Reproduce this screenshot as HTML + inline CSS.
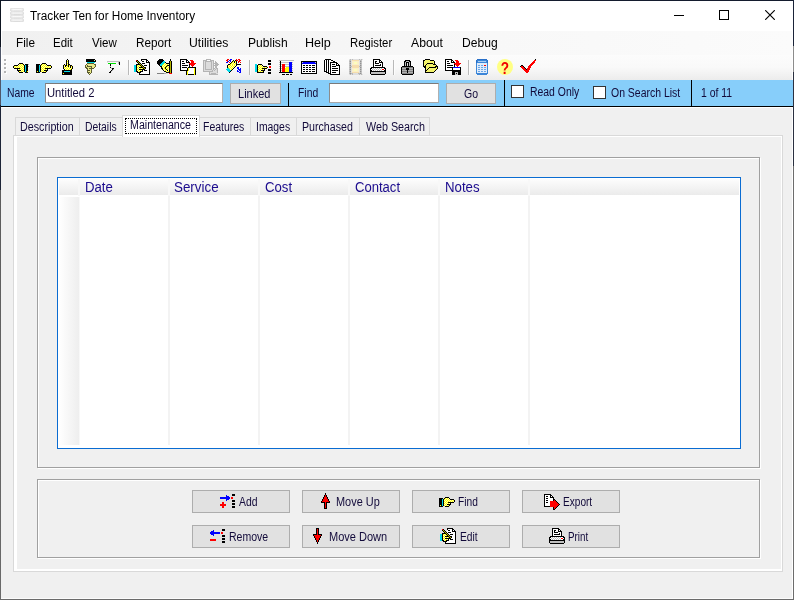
<!DOCTYPE html>
<html lang="en"><head><meta charset="utf-8"><title>Tracker Ten for Home Inventory</title>
<style>
html,body{margin:0;padding:0;}
body{width:794px;height:600px;overflow:hidden;background:#f0f0f0;position:relative;font-family:"Liberation Sans",sans-serif;font-size:11px;color:#000;}
.a{position:absolute;}
.ic{position:absolute;display:block;}
.t{position:absolute;white-space:nowrap;line-height:1;transform-origin:0 0;}
#win{position:absolute;left:0;top:0;width:794px;height:600px;background:#f0f0f0;}
#tbbg{left:1px;top:31px;width:792px;height:49px;background:#fff;}
#title{left:1px;top:1px;width:792px;height:30px;background:#fff;}
#menubar{left:2px;top:31px;width:790px;height:24px;background:linear-gradient(90deg,#f0f0f0,#f7f7f7 50%,#fbfbfb);}
#toolbar{left:2px;top:55px;width:790px;height:25px;background:linear-gradient(#fcfcfc,#f9f9f9 50%,#ececec);}
.m{font-size:12px;top:37px;}
#bluebar{left:1px;top:80px;width:792px;height:26px;background:#87cefa;}
.inp{background:#fff;border:1px solid;border-color:#7a7a7a #b0b0b0 #a8a8a8 #8c8c8c;box-sizing:border-box;}
.btn{background:#e1e1e1;border:1px solid #adadad;box-sizing:border-box;}
.tab{box-sizing:border-box;border:1px solid #d9d9d9;border-bottom:none;background:#f0f0f0;top:117px;height:18px;}
.tl{font-size:11px;top:121px;}
.bl{font-size:11px;}
.gh{font-size:13px;color:#12128a;top:181px;}
.cs{top:179px;width:2px;height:266px;background:linear-gradient(#f8f8f8 0,#f8f8f8 17px,#f3f3f3 17px,#f3f3f3 100%);}
.grip{left:4px;width:2px;height:2px;background:#b4b4b4;box-shadow:1px 1px 0 #fff;}
.tsep{top:60px;width:1px;height:15px;background:#b9b9b9;box-shadow:1px 0 0 #fdfdfd;}
.qm{left:497px;top:60px;width:16px;height:16px;line-height:17px;text-align:center;font-size:17px;font-weight:bold;color:#f00000;transform:scaleX(.8);}

</style></head>
<body>
<div id="win">
<div class="a" id="title"></div>
<svg class="ic" style="left:10px;top:8px" width="14" height="14" viewBox="0 0 14 14">
<defs><linearGradient id="dv" x1="0" x2="0" y1="0" y2="1"><stop offset="0" stop-color="#dadada"/><stop offset=".45" stop-color="#fafafa"/><stop offset="1" stop-color="#d2d2d2"/></linearGradient>
<linearGradient id="dh" x1="0" x2="1" y1="0" y2="0"><stop offset="0" stop-color="#d0d0d0" stop-opacity=".8"/><stop offset=".3" stop-color="#fff" stop-opacity="0"/><stop offset=".7" stop-color="#fff" stop-opacity="0"/><stop offset="1" stop-color="#d0d0d0" stop-opacity=".8"/></linearGradient></defs>
<g><rect x="0" y="0" width="14" height="3.5" rx="1.7" fill="url(#dv)"/><rect x="0" y="3.5" width="14" height="3.5" rx="1.7" fill="url(#dv)"/><rect x="0" y="7" width="14" height="3.5" rx="1.7" fill="url(#dv)"/><rect x="0" y="10.5" width="14" height="3.5" rx="1.7" fill="url(#dv)"/>
<rect x="0" y="0" width="14" height="3.5" rx="1.7" fill="url(#dh)"/><rect x="0" y="3.5" width="14" height="3.5" rx="1.7" fill="url(#dh)"/><rect x="0" y="7" width="14" height="3.5" rx="1.7" fill="url(#dh)"/><rect x="0" y="10.5" width="14" height="3.5" rx="1.7" fill="url(#dh)"/></g>
</svg>
<div class="a" style="left:674px;top:15px;width:10px;height:1px;background:#000"></div>
<div class="a" style="left:719px;top:10px;width:10px;height:10px;box-sizing:border-box;border:1px solid #000"></div>
<svg class="ic" style="left:765px;top:10px" width="10" height="10" viewBox="0 0 10 10"><path d="M0.2 0.2L9.8 9.8M9.8 0.2L0.2 9.8" stroke="#000" stroke-width="1.15" fill="none"/></svg>
<div class="a" id="tbbg"></div>
<div class="a" id="menubar"></div>
<div class="a" id="toolbar"></div>
<!-- toolbar grip -->
<div class="a grip" style="top:59px"></div><div class="a grip" style="top:63px"></div><div class="a grip" style="top:67px"></div><div class="a grip" style="top:71px"></div>
<svg class="ic" style="left:13px;top:59px" width="16" height="14" viewBox="0 0 16 14" shape-rendering="crispEdges"><path fill="#000" d="M6 4h4v1h-4zM5 5h1v1h-1zM10 5h1v1h-1zM12 5h3v1h-3zM1 6h4v1h-4zM11 6h1v1h-1zM13 6h2v1h-2zM0 7h1v1h-1zM11 7h1v1h-1zM13 7h2v1h-2zM0 8h1v1h-1zM11 8h1v1h-1zM13 8h2v1h-2zM1 9h6v1h-6zM11 9h1v1h-1zM13 9h2v1h-2zM4 10h1v1h-1zM11 10h1v1h-1zM13 10h2v1h-2zM4 11h4v1h-4zM11 11h1v1h-1zM13 11h2v1h-2zM5 12h1v1h-1zM11 12h1v1h-1zM13 12h1v1h-1zM6 13h4v1h-4zM12 13h3v1h-3z"/><path fill="#ffffb0" d="M6 5h1v1h-1zM8 5h1v1h-1zM5 6h1v1h-1zM7 6h1v1h-1zM9 6h1v1h-1zM2 7h1v1h-1zM4 7h1v1h-1zM6 7h1v1h-1zM8 7h1v1h-1zM10 7h1v1h-1zM1 8h1v1h-1zM3 8h1v1h-1zM5 8h1v1h-1zM7 8h1v1h-1zM9 8h1v1h-1zM8 9h1v1h-1zM10 9h1v1h-1zM5 10h1v1h-1zM7 10h1v1h-1zM9 10h1v1h-1zM8 11h1v1h-1zM10 11h1v1h-1zM7 12h1v1h-1zM9 12h1v1h-1z"/><path fill="#ffff00" d="M7 5h1v1h-1zM9 5h1v1h-1zM6 6h1v1h-1zM8 6h1v1h-1zM10 6h1v1h-1zM1 7h1v1h-1zM3 7h1v1h-1zM5 7h1v1h-1zM7 7h1v1h-1zM9 7h1v1h-1zM2 8h1v1h-1zM4 8h1v1h-1zM6 8h1v1h-1zM8 8h1v1h-1zM10 8h1v1h-1zM7 9h1v1h-1zM9 9h1v1h-1zM6 10h1v1h-1zM8 10h1v1h-1zM10 10h1v1h-1zM9 11h1v1h-1zM6 12h1v1h-1zM8 12h1v1h-1zM10 12h1v1h-1zM14 12h1v1h-1z"/><path fill="#b0b0b0" d="M15 5h1v1h-1zM15 7h1v1h-1z"/><path fill="#00d8e8" d="M12 6h1v1h-1zM12 7h1v1h-1zM12 8h1v1h-1zM12 9h1v1h-1zM12 10h1v1h-1zM12 11h1v1h-1zM12 12h1v1h-1z"/></svg>
<svg class="ic" style="left:36px;top:59px" width="16" height="14" viewBox="0 0 16 14" shape-rendering="crispEdges"><path fill="#000" d="M6 4h4v1h-4zM0 5h4v1h-4zM5 5h1v1h-1zM10 5h1v1h-1zM0 6h3v1h-3zM4 6h1v1h-1zM11 6h4v1h-4zM0 7h3v1h-3zM4 7h1v1h-1zM15 7h1v1h-1zM0 8h3v1h-3zM4 8h1v1h-1zM15 8h1v1h-1zM0 9h3v1h-3zM4 9h1v1h-1zM9 9h6v1h-6zM0 10h3v1h-3zM4 10h1v1h-1zM11 10h1v1h-1zM0 11h3v1h-3zM4 11h1v1h-1zM8 11h4v1h-4zM0 12h1v1h-1zM2 12h1v1h-1zM4 12h1v1h-1zM10 12h1v1h-1zM0 13h4v1h-4zM6 13h4v1h-4z"/><path fill="#ffff00" d="M6 5h1v1h-1zM8 5h1v1h-1zM5 6h1v1h-1zM7 6h1v1h-1zM9 6h1v1h-1zM6 7h1v1h-1zM8 7h1v1h-1zM10 7h1v1h-1zM12 7h1v1h-1zM14 7h1v1h-1zM5 8h1v1h-1zM7 8h1v1h-1zM9 8h1v1h-1zM11 8h1v1h-1zM13 8h1v1h-1zM6 9h1v1h-1zM8 9h1v1h-1zM5 10h1v1h-1zM7 10h1v1h-1zM9 10h1v1h-1zM6 11h1v1h-1zM1 12h1v1h-1zM5 12h1v1h-1zM7 12h1v1h-1zM9 12h1v1h-1z"/><path fill="#ffffb0" d="M7 5h1v1h-1zM9 5h1v1h-1zM6 6h1v1h-1zM8 6h1v1h-1zM10 6h1v1h-1zM5 7h1v1h-1zM7 7h1v1h-1zM9 7h1v1h-1zM11 7h1v1h-1zM13 7h1v1h-1zM6 8h1v1h-1zM8 8h1v1h-1zM10 8h1v1h-1zM12 8h1v1h-1zM14 8h1v1h-1zM5 9h1v1h-1zM7 9h1v1h-1zM6 10h1v1h-1zM8 10h1v1h-1zM10 10h1v1h-1zM5 11h1v1h-1zM7 11h1v1h-1zM6 12h1v1h-1zM8 12h1v1h-1z"/><path fill="#00d8e8" d="M3 6h1v1h-1zM3 7h1v1h-1zM3 8h1v1h-1zM3 9h1v1h-1zM3 10h1v1h-1zM3 11h1v1h-1zM3 12h1v1h-1z"/></svg>
<svg class="ic" style="left:59px;top:59px" width="16" height="16" viewBox="0 0 16 16" shape-rendering="crispEdges"><path fill="#000" d="M8 0h1v1h-1zM7 1h1v1h-1zM9 1h1v1h-1zM7 2h1v1h-1zM9 2h1v1h-1zM7 3h1v1h-1zM9 3h1v1h-1zM7 4h1v1h-1zM9 4h1v1h-1zM5 5h1v1h-1zM7 5h1v1h-1zM9 5h2v1h-2zM4 6h1v1h-1zM6 6h2v1h-2zM9 6h1v1h-1zM11 6h2v1h-2zM4 7h1v1h-1zM6 7h1v1h-1zM9 7h1v1h-1zM11 7h1v1h-1zM13 7h1v1h-1zM4 8h1v1h-1zM11 8h1v1h-1zM13 8h1v1h-1zM4 9h1v1h-1zM13 9h1v1h-1zM5 10h1v1h-1zM12 10h1v1h-1zM3 11h10v1h-10zM3 12h2v1h-2zM11 12h2v1h-2zM3 13h10v1h-10zM3 14h1v1h-1zM5 14h8v1h-8zM3 15h10v1h-10z"/><path fill="#ffffb0" d="M8 1h1v1h-1zM8 3h1v1h-1zM8 5h1v1h-1zM5 7h1v1h-1zM7 7h1v1h-1zM10 7h1v1h-1zM6 8h1v1h-1zM8 8h1v1h-1zM10 8h1v1h-1zM12 8h1v1h-1zM5 9h1v1h-1zM7 9h1v1h-1zM9 9h1v1h-1zM11 9h1v1h-1zM6 10h1v1h-1zM8 10h1v1h-1zM10 10h1v1h-1z"/><path fill="#ffff00" d="M8 2h1v1h-1zM8 4h1v1h-1zM5 6h1v1h-1zM8 6h1v1h-1zM10 6h1v1h-1zM8 7h1v1h-1zM12 7h1v1h-1zM5 8h1v1h-1zM7 8h1v1h-1zM9 8h1v1h-1zM6 9h1v1h-1zM8 9h1v1h-1zM10 9h1v1h-1zM12 9h1v1h-1zM7 10h1v1h-1zM9 10h1v1h-1zM11 10h1v1h-1zM4 14h1v1h-1z"/><path fill="#00d8e8" d="M5 12h6v1h-6z"/></svg>
<svg class="ic" style="left:82px;top:59px" width="16" height="16" viewBox="0 0 16 16" shape-rendering="crispEdges"><path fill="#000" d="M4 0h9v1h-9zM4 1h8v1h-8zM13 1h1v1h-1zM4 2h10v1h-10z"/><path fill="#eaea88" d="M12 1h1v1h-1zM5 5h7v1h-7zM4 6h1v1h-1zM6 6h7v1h-7zM4 7h1v1h-1zM10 7h3v1h-3zM5 8h4v1h-4zM10 8h2v1h-2zM6 9h1v1h-1zM6 10h3v1h-3zM8 11h1v1h-1zM6 12h3v1h-3zM8 13h1v1h-1zM7 14h1v1h-1z"/><path fill="#00d8e8" d="M5 3h8v1h-8z"/><path fill="#5c5c30" d="M5 4h7v1h-7zM4 5h1v1h-1zM12 5h2v1h-2zM3 6h1v1h-1zM5 6h1v1h-1zM13 6h1v1h-1zM3 7h1v1h-1zM5 7h5v1h-5zM13 7h1v1h-1zM3 8h2v1h-2zM9 8h1v1h-1zM12 8h1v1h-1zM4 9h2v1h-2zM7 9h5v1h-5zM5 10h1v1h-1zM9 10h1v1h-1zM5 11h3v1h-3zM9 11h1v1h-1zM5 12h1v1h-1zM9 12h1v1h-1zM5 13h3v1h-3zM9 13h1v1h-1zM6 14h1v1h-1zM8 14h1v1h-1zM7 15h1v1h-1z"/></svg>
<svg class="ic" style="left:105px;top:59px" width="16" height="14" viewBox="0 0 16 14" shape-rendering="crispEdges"><path fill="#c0c0c0" d="M2 2h13v1h-13zM13 3h1v1h-1zM13 4h1v1h-1zM5 7h1v1h-1zM6 9h1v1h-1zM8 10h1v1h-1zM7 11h1v1h-1zM6 12h1v1h-1z"/><path fill="#e8e8e8" d="M2 3h1v1h-1z"/><path fill="#000" d="M14 3h1v1h-1zM14 4h1v1h-1zM5 5h1v1h-1zM14 5h1v1h-1zM5 6h1v1h-1zM5 8h1v1h-1zM7 9h2v1h-2zM7 10h1v1h-1zM6 11h1v1h-1zM5 12h1v1h-1zM4 13h2v1h-2z"/><path fill="#00e000" d="M3 4h8v1h-8z"/></svg>
<div class="a tsep" style="left:128px"></div>
<svg class="ic" style="left:134px;top:59px" width="16" height="16" viewBox="0 0 16 16" shape-rendering="crispEdges"><path fill="#000" d="M7 0h6v1h-6zM3 1h1v1h-1zM7 1h1v1h-1zM12 1h2v1h-2zM2 2h1v1h-1zM4 2h1v1h-1zM8 2h2v1h-2zM12 2h1v1h-1zM14 2h1v1h-1zM3 3h1v1h-1zM5 3h1v1h-1zM12 3h4v1h-4zM4 4h1v1h-1zM6 4h1v1h-1zM8 4h3v1h-3zM15 4h1v1h-1zM2 5h4v1h-4zM7 5h1v1h-1zM15 5h1v1h-1zM2 6h1v1h-1zM6 6h1v1h-1zM8 6h1v1h-1zM10 6h3v1h-3zM15 6h1v1h-1zM2 7h1v1h-1zM7 7h1v1h-1zM9 7h1v1h-1zM15 7h1v1h-1zM2 8h1v1h-1zM5 8h4v1h-4zM10 8h2v1h-2zM15 8h1v1h-1zM2 9h1v1h-1zM9 9h1v1h-1zM11 9h1v1h-1zM15 9h1v1h-1zM2 10h1v1h-1zM5 10h6v1h-6zM15 10h1v1h-1zM2 11h1v1h-1zM8 11h1v1h-1zM10 11h3v1h-3zM15 11h1v1h-1zM2 12h2v1h-2zM6 12h3v1h-3zM15 12h1v1h-1zM3 13h4v1h-4zM15 13h1v1h-1zM5 14h1v1h-1zM15 14h1v1h-1zM5 15h11v1h-11z"/><path fill="#ff0000" d="M2 1h1v1h-1z"/><path fill="#fff" d="M8 1h4v1h-4zM7 2h1v1h-1zM10 2h2v1h-2zM13 2h1v1h-1zM7 3h5v1h-5zM7 4h1v1h-1zM11 4h4v1h-4zM8 5h7v1h-7zM9 6h1v1h-1zM13 6h2v1h-2zM10 7h5v1h-5zM12 8h3v1h-3zM12 9h3v1h-3zM11 10h4v1h-4zM9 11h1v1h-1zM13 11h2v1h-2zM9 12h6v1h-6zM7 13h8v1h-8zM6 14h9v1h-9z"/><path fill="#b4b400" d="M3 2h1v1h-1zM4 3h1v1h-1zM5 4h1v1h-1zM6 5h1v1h-1zM7 6h1v1h-1zM8 7h1v1h-1zM9 8h1v1h-1zM10 9h1v1h-1z"/><path fill="#00d8e8" d="M0 6h2v1h-2zM0 7h2v1h-2zM0 8h2v1h-2zM0 9h2v1h-2zM0 10h2v1h-2zM0 11h2v1h-2zM0 12h2v1h-2z"/><path fill="#ffff00" d="M3 6h1v1h-1zM5 6h1v1h-1zM4 7h1v1h-1zM6 7h1v1h-1zM3 8h1v1h-1zM4 9h1v1h-1zM6 9h1v1h-1zM8 9h1v1h-1zM3 10h1v1h-1zM4 11h1v1h-1zM6 11h1v1h-1zM5 12h1v1h-1z"/><path fill="#ffffb0" d="M4 6h1v1h-1zM3 7h1v1h-1zM5 7h1v1h-1zM4 8h1v1h-1zM3 9h1v1h-1zM5 9h1v1h-1zM7 9h1v1h-1zM4 10h1v1h-1zM3 11h1v1h-1zM5 11h1v1h-1zM7 11h1v1h-1zM4 12h1v1h-1z"/></svg>
<svg class="ic" style="left:157px;top:59px" width="16" height="16" viewBox="0 0 16 16" shape-rendering="crispEdges"><path fill="#000" d="M2 0h4v1h-4zM13 0h1v1h-1zM1 1h6v1h-6zM13 1h1v1h-1zM0 2h6v1h-6zM12 2h1v1h-1zM14 2h1v1h-1zM0 3h5v1h-5zM8 3h1v1h-1zM12 3h1v1h-1zM14 3h1v1h-1zM0 4h4v1h-4zM9 4h4v1h-4zM14 4h1v1h-1zM1 5h2v1h-2zM12 5h1v1h-1zM14 5h1v1h-1zM2 6h1v1h-1zM10 6h3v1h-3zM14 6h1v1h-1zM3 7h2v1h-2zM9 7h1v1h-1zM12 7h1v1h-1zM14 7h1v1h-1zM4 8h1v1h-1zM8 8h1v1h-1zM12 8h1v1h-1zM14 8h1v1h-1zM4 9h2v1h-2zM8 9h1v1h-1zM12 9h1v1h-1zM14 9h1v1h-1zM5 10h1v1h-1zM9 10h1v1h-1zM12 10h1v1h-1zM14 10h1v1h-1zM6 11h1v1h-1zM10 11h1v1h-1zM12 11h1v1h-1zM14 11h1v1h-1zM7 12h2v1h-2zM12 12h1v1h-1zM14 12h1v1h-1zM9 13h4v1h-4zM14 13h1v1h-1z"/><path fill="#00d8e8" d="M6 2h2v1h-2zM5 3h3v1h-3zM4 4h3v1h-3zM3 5h3v1h-3zM3 6h2v1h-2z"/><path fill="#b4b400" d="M13 2h1v1h-1zM13 3h1v1h-1zM13 4h1v1h-1zM13 5h1v1h-1zM13 6h1v1h-1zM13 7h1v1h-1zM13 8h1v1h-1zM13 9h1v1h-1zM13 10h1v1h-1zM13 11h1v1h-1zM13 12h1v1h-1zM13 13h1v1h-1z"/><path fill="#ffff00" d="M7 4h1v1h-1zM6 5h1v1h-1zM8 5h1v1h-1zM10 5h1v1h-1zM5 6h1v1h-1zM7 6h1v1h-1zM9 6h1v1h-1zM6 7h1v1h-1zM8 7h1v1h-1zM10 7h1v1h-1zM5 8h1v1h-1zM7 8h1v1h-1zM9 8h1v1h-1zM11 8h1v1h-1zM7 9h1v1h-1zM10 9h1v1h-1zM6 10h1v1h-1zM8 10h1v1h-1zM10 10h1v1h-1zM8 11h1v1h-1zM9 12h1v1h-1zM11 12h1v1h-1z"/><path fill="#ffffb0" d="M8 4h1v1h-1zM7 5h1v1h-1zM9 5h1v1h-1zM11 5h1v1h-1zM6 6h1v1h-1zM8 6h1v1h-1zM5 7h1v1h-1zM7 7h1v1h-1zM11 7h1v1h-1zM6 8h1v1h-1zM10 8h1v1h-1zM6 9h1v1h-1zM9 9h1v1h-1zM11 9h1v1h-1zM7 10h1v1h-1zM11 10h1v1h-1zM7 11h1v1h-1zM9 11h1v1h-1zM11 11h1v1h-1zM10 12h1v1h-1z"/><path fill="#808080" d="M0 14h7v1h-7z"/><path fill="#b0b0b0" d="M7 14h2v1h-2z"/><path fill="#dcdcdc" d="M9 14h2v1h-2z"/><path fill="#ff0000" d="M12 14h3v1h-3z"/></svg>
<svg class="ic" style="left:180px;top:59px" width="16" height="16" viewBox="0 0 16 16" shape-rendering="crispEdges"><path fill="#000" d="M0 0h7v1h-7zM0 1h1v1h-1zM6 1h2v1h-2zM0 2h1v1h-1zM2 2h2v1h-2zM6 2h1v1h-1zM8 2h1v1h-1zM0 3h1v1h-1zM6 3h4v1h-4zM0 4h1v1h-1zM2 4h3v1h-3zM0 5h1v1h-1zM9 5h1v1h-1zM0 6h1v1h-1zM2 6h6v1h-6zM9 6h1v1h-1zM0 7h1v1h-1zM9 7h1v1h-1zM0 8h1v1h-1zM2 8h5v1h-5zM8 8h8v1h-8zM0 9h1v1h-1zM7 9h1v1h-1zM15 9h1v1h-1zM0 10h1v1h-1zM7 10h1v1h-1zM15 10h1v1h-1zM0 11h8v1h-8zM15 11h1v1h-1zM6 12h1v1h-1zM15 12h1v1h-1zM6 13h1v1h-1zM15 13h1v1h-1zM6 14h1v1h-1zM15 14h1v1h-1zM6 15h1v1h-1zM8 15h6v1h-6zM15 15h1v1h-1z"/><path fill="#fff" d="M1 1h5v1h-5zM1 2h1v1h-1zM4 2h2v1h-2zM7 2h1v1h-1zM1 3h5v1h-5zM1 4h1v1h-1zM5 4h4v1h-4zM1 5h8v1h-8zM1 6h1v1h-1zM8 6h1v1h-1zM1 7h8v1h-8zM1 8h1v1h-1zM7 8h1v1h-1zM1 9h6v1h-6zM9 9h5v1h-5zM1 10h6v1h-6zM9 10h5v1h-5zM9 11h5v1h-5zM8 12h6v1h-6zM8 13h6v1h-6zM8 14h6v1h-6z"/><path fill="#ff0000" d="M10 1h3v1h-3zM11 2h3v1h-3zM11 3h3v1h-3zM9 4h7v1h-7zM10 5h5v1h-5zM11 6h3v1h-3zM12 7h1v1h-1z"/><path fill="#ffff00" d="M8 9h1v1h-1zM14 9h1v1h-1zM8 10h1v1h-1zM14 10h1v1h-1zM8 11h1v1h-1zM14 11h1v1h-1zM7 12h1v1h-1zM14 12h1v1h-1zM7 13h1v1h-1zM14 13h1v1h-1zM7 14h1v1h-1zM14 14h1v1h-1zM7 15h1v1h-1zM14 15h1v1h-1z"/></svg>
<svg class="ic" style="left:203px;top:59px" width="16" height="16" viewBox="0 0 16 16" shape-rendering="crispEdges"><path fill="#b4b4b4" d="M3 0h5v1h-5zM0 1h4v1h-4zM7 1h4v1h-4zM0 2h1v1h-1zM2 2h7v1h-7zM10 2h1v1h-1zM12 2h1v1h-1zM0 3h1v1h-1zM2 3h1v1h-1zM8 3h1v1h-1zM10 3h1v1h-1zM12 3h2v1h-2zM0 4h1v1h-1zM2 4h1v1h-1zM8 4h1v1h-1zM10 4h5v1h-5zM0 5h1v1h-1zM2 5h1v1h-1zM8 5h1v1h-1zM10 5h1v1h-1zM12 5h4v1h-4zM0 6h1v1h-1zM2 6h1v1h-1zM8 6h1v1h-1zM10 6h5v1h-5zM0 7h1v1h-1zM2 7h1v1h-1zM8 7h1v1h-1zM10 7h1v1h-1zM12 7h2v1h-2zM0 8h1v1h-1zM2 8h1v1h-1zM8 8h1v1h-1zM10 8h1v1h-1zM12 8h2v1h-2zM0 9h1v1h-1zM2 9h1v1h-1zM8 9h1v1h-1zM10 9h2v1h-2zM13 9h2v1h-2zM0 10h1v1h-1zM2 10h7v1h-7zM10 10h1v1h-1zM12 10h1v1h-1zM14 10h1v1h-1zM0 11h1v1h-1zM9 11h1v1h-1zM11 11h1v1h-1zM14 11h1v1h-1zM0 12h10v1h-10zM14 12h1v1h-1zM6 13h1v1h-1zM14 13h1v1h-1zM6 14h1v1h-1zM8 14h5v1h-5zM6 15h9v1h-9z"/><path fill="#dcdcdc" d="M1 2h1v1h-1zM9 2h1v1h-1zM1 3h1v1h-1zM3 3h5v1h-5zM9 3h1v1h-1zM1 4h1v1h-1zM3 4h5v1h-5zM9 4h1v1h-1zM1 5h1v1h-1zM3 5h5v1h-5zM9 5h1v1h-1zM1 6h1v1h-1zM3 6h5v1h-5zM9 6h1v1h-1zM1 7h1v1h-1zM3 7h5v1h-5zM9 7h1v1h-1zM1 8h1v1h-1zM3 8h5v1h-5zM9 8h1v1h-1zM1 9h1v1h-1zM3 9h5v1h-5zM9 9h1v1h-1zM12 9h1v1h-1zM1 10h1v1h-1zM9 10h1v1h-1zM11 10h1v1h-1zM13 10h1v1h-1zM1 11h8v1h-8zM10 11h1v1h-1zM12 11h2v1h-2zM10 12h4v1h-4zM7 13h7v1h-7zM7 14h1v1h-1zM13 14h2v1h-2z"/></svg>
<svg class="ic" style="left:226px;top:59px" width="16" height="16" viewBox="0 0 16 16" shape-rendering="crispEdges"><path fill="#ff0000" d="M1 0h2v1h-2zM10 0h1v1h-1zM12 0h2v1h-2zM0 1h2v1h-2zM10 1h2v1h-2zM13 1h2v1h-2zM1 2h1v1h-1zM12 2h2v1h-2zM3 3h1v1h-1zM12 3h1v1h-1zM14 3h1v1h-1z"/><path fill="#0000ff" d="M4 0h2v1h-2zM3 1h2v1h-2zM2 2h1v1h-1zM4 2h1v1h-1zM0 3h2v1h-2zM11 8h2v1h-2zM11 9h2v1h-2zM14 9h1v1h-1zM12 10h3v1h-3zM11 11h1v1h-1zM13 11h2v1h-2zM11 12h2v1h-2zM14 12h1v1h-1zM13 13h2v1h-2z"/><path fill="#000" d="M7 1h1v1h-1zM9 1h1v1h-1zM6 2h1v1h-1zM8 2h1v1h-1zM10 2h1v1h-1zM5 3h1v1h-1zM8 3h1v1h-1zM10 3h1v1h-1zM4 4h1v1h-1zM10 4h1v1h-1zM2 5h2v1h-2zM10 5h5v1h-5zM1 6h1v1h-1zM10 6h1v1h-1zM1 7h1v1h-1zM9 7h1v1h-1zM1 8h1v1h-1zM8 8h1v1h-1zM7 9h1v1h-1zM6 10h1v1h-1zM5 11h1v1h-1zM4 12h1v1h-1zM3 13h1v1h-1z"/><path fill="#ffff00" d="M7 2h1v1h-1zM9 2h1v1h-1zM6 3h1v1h-1zM5 4h1v1h-1zM7 4h1v1h-1zM9 4h1v1h-1zM4 5h1v1h-1zM6 5h1v1h-1zM8 5h1v1h-1zM2 6h1v1h-1zM4 6h1v1h-1zM6 6h1v1h-1zM8 6h1v1h-1zM3 7h1v1h-1zM5 7h1v1h-1zM7 7h1v1h-1zM2 8h1v1h-1zM4 8h1v1h-1zM6 8h1v1h-1zM3 9h1v1h-1zM5 9h1v1h-1zM5 10h1v1h-1z"/><path fill="#ffffb0" d="M7 3h1v1h-1zM9 3h1v1h-1zM6 4h1v1h-1zM8 4h1v1h-1zM5 5h1v1h-1zM7 5h1v1h-1zM9 5h1v1h-1zM3 6h1v1h-1zM5 6h1v1h-1zM7 6h1v1h-1zM9 6h1v1h-1zM2 7h1v1h-1zM4 7h1v1h-1zM6 7h1v1h-1zM8 7h1v1h-1zM3 8h1v1h-1zM5 8h1v1h-1zM7 8h1v1h-1zM4 9h1v1h-1zM6 9h1v1h-1zM4 10h1v1h-1z"/><path fill="#00d8e8" d="M1 9h2v1h-2zM0 10h4v1h-4zM1 11h4v1h-4zM2 12h2v1h-2z"/></svg>
<div class="a tsep" style="left:249px"></div>
<svg class="ic" style="left:255px;top:59px" width="16" height="16" viewBox="0 0 16 16" shape-rendering="crispEdges"><path fill="#000" d="M13 1h3v1h-3zM13 2h3v1h-3zM13 4h3v1h-3zM3 5h4v1h-4zM13 5h3v1h-3zM2 6h1v1h-1zM7 6h1v1h-1zM2 7h1v1h-1zM8 7h4v1h-4zM2 8h1v1h-1zM12 8h1v1h-1zM2 9h1v1h-1zM7 9h5v1h-5zM2 10h1v1h-1zM9 10h1v1h-1zM13 10h3v1h-3zM2 11h1v1h-1zM6 11h4v1h-4zM13 11h3v1h-3zM2 12h1v1h-1zM8 12h1v1h-1zM2 13h7v1h-7zM13 13h3v1h-3zM13 14h3v1h-3z"/><path fill="#00d8e8" d="M0 5h2v1h-2zM0 6h2v1h-2zM0 7h2v1h-2zM0 8h2v1h-2zM0 9h2v1h-2zM0 10h2v1h-2zM0 11h2v1h-2zM0 12h2v1h-2z"/><path fill="#ffff00" d="M3 6h1v1h-1zM5 6h1v1h-1zM4 7h1v1h-1zM6 7h1v1h-1zM3 8h1v1h-1zM5 8h1v1h-1zM7 8h1v1h-1zM9 8h1v1h-1zM11 8h1v1h-1zM4 9h1v1h-1zM6 9h1v1h-1zM3 10h1v1h-1zM5 10h1v1h-1zM7 10h1v1h-1zM4 11h1v1h-1zM3 12h1v1h-1zM5 12h1v1h-1zM7 12h1v1h-1z"/><path fill="#ffffb0" d="M4 6h1v1h-1zM6 6h1v1h-1zM3 7h1v1h-1zM5 7h1v1h-1zM7 7h1v1h-1zM4 8h1v1h-1zM6 8h1v1h-1zM8 8h1v1h-1zM10 8h1v1h-1zM3 9h1v1h-1zM5 9h1v1h-1zM4 10h1v1h-1zM6 10h1v1h-1zM8 10h1v1h-1zM3 11h1v1h-1zM5 11h1v1h-1zM4 12h1v1h-1zM6 12h1v1h-1z"/><path fill="#ff0000" d="M14 7h2v1h-2zM14 8h2v1h-2z"/></svg>
<svg class="ic" style="left:278px;top:59px" width="16" height="16" viewBox="0 0 16 16" shape-rendering="crispEdges"><path fill="#c0c0c0" d="M1 1h15v1h-15zM1 3h1v1h-1zM3 3h8v1h-8zM14 3h1v1h-1zM1 5h1v1h-1zM3 5h1v1h-1zM7 5h4v1h-4zM14 5h1v1h-1zM1 7h1v1h-1zM3 7h1v1h-1zM7 7h4v1h-4zM14 7h1v1h-1zM1 9h1v1h-1zM3 9h1v1h-1zM14 9h1v1h-1zM1 11h1v1h-1zM3 11h1v1h-1zM14 11h1v1h-1z"/><path fill="#000" d="M2 2h1v1h-1zM2 3h1v1h-1zM2 4h1v1h-1zM2 5h1v1h-1zM2 6h1v1h-1zM2 7h1v1h-1zM2 8h1v1h-1zM2 9h1v1h-1zM2 10h1v1h-1zM2 11h1v1h-1zM2 12h1v1h-1zM1 13h14v1h-14zM4 15h3v1h-3zM8 15h3v1h-3zM12 15h2v1h-2z"/><path fill="#0000ff" d="M11 3h3v1h-3zM11 4h3v1h-3zM11 5h3v1h-3zM11 6h3v1h-3zM11 7h3v1h-3zM11 8h3v1h-3zM11 9h3v1h-3zM11 10h3v1h-3zM11 11h3v1h-3zM11 12h3v1h-3z"/><path fill="#ff0000" d="M4 5h3v1h-3zM4 6h3v1h-3zM4 7h3v1h-3zM4 8h3v1h-3zM4 9h3v1h-3zM4 10h3v1h-3zM4 11h3v1h-3zM4 12h3v1h-3z"/><path fill="#ffff00" d="M8 8h3v1h-3zM7 9h4v1h-4zM7 10h4v1h-4zM7 11h4v1h-4zM7 12h4v1h-4z"/></svg>
<svg class="ic" style="left:301px;top:59px" width="16" height="15" viewBox="0 0 16 15" shape-rendering="crispEdges"><path fill="#000" d="M0 2h16v1h-16zM0 3h1v1h-1zM15 3h1v1h-1zM0 4h1v1h-1zM15 4h1v1h-1zM0 5h1v1h-1zM15 5h1v1h-1zM0 6h1v1h-1zM2 6h2v1h-2zM5 6h2v1h-2zM8 6h2v1h-2zM11 6h3v1h-3zM15 6h1v1h-1zM0 7h1v1h-1zM15 7h1v1h-1zM0 8h1v1h-1zM2 8h2v1h-2zM5 8h2v1h-2zM8 8h2v1h-2zM11 8h3v1h-3zM15 8h1v1h-1zM0 9h1v1h-1zM15 9h1v1h-1zM0 10h1v1h-1zM2 10h2v1h-2zM5 10h2v1h-2zM8 10h2v1h-2zM11 10h3v1h-3zM15 10h1v1h-1zM0 11h1v1h-1zM15 11h1v1h-1zM0 12h1v1h-1zM2 12h2v1h-2zM5 12h2v1h-2zM8 12h2v1h-2zM11 12h3v1h-3zM15 12h1v1h-1zM0 13h1v1h-1zM15 13h1v1h-1zM0 14h16v1h-16z"/><path fill="#c0c0c0" d="M1 3h1v1h-1zM14 3h1v1h-1z"/><path fill="#0000ff" d="M2 3h12v1h-12zM1 4h14v1h-14z"/><path fill="#fff" d="M1 5h14v1h-14zM1 6h1v1h-1zM4 6h1v1h-1zM7 6h1v1h-1zM10 6h1v1h-1zM14 6h1v1h-1zM1 7h14v1h-14zM1 8h1v1h-1zM4 8h1v1h-1zM7 8h1v1h-1zM10 8h1v1h-1zM14 8h1v1h-1zM1 9h14v1h-14zM1 10h1v1h-1zM4 10h1v1h-1zM7 10h1v1h-1zM10 10h1v1h-1zM14 10h1v1h-1zM1 11h14v1h-14zM1 12h1v1h-1zM4 12h1v1h-1zM7 12h1v1h-1zM10 12h1v1h-1zM14 12h1v1h-1zM1 13h14v1h-14z"/></svg>
<svg class="ic" style="left:324px;top:59px" width="16" height="16" viewBox="0 0 16 16" shape-rendering="crispEdges"><path fill="#000" d="M1 0h6v1h-6zM0 1h1v1h-1zM2 1h1v1h-1zM4 1h1v1h-1zM7 1h2v1h-2zM0 2h1v1h-1zM2 2h1v1h-1zM4 2h1v1h-1zM9 2h2v1h-2zM0 3h1v1h-1zM2 3h1v1h-1zM4 3h1v1h-1zM6 3h7v1h-7zM0 4h1v1h-1zM2 4h1v1h-1zM4 4h1v1h-1zM6 4h1v1h-1zM12 4h2v1h-2zM0 5h1v1h-1zM2 5h1v1h-1zM4 5h1v1h-1zM6 5h1v1h-1zM8 5h3v1h-3zM12 5h1v1h-1zM14 5h1v1h-1zM0 6h1v1h-1zM2 6h1v1h-1zM4 6h1v1h-1zM6 6h1v1h-1zM12 6h4v1h-4zM0 7h1v1h-1zM2 7h1v1h-1zM4 7h1v1h-1zM6 7h1v1h-1zM8 7h4v1h-4zM15 7h1v1h-1zM0 8h1v1h-1zM2 8h1v1h-1zM4 8h1v1h-1zM6 8h1v1h-1zM15 8h1v1h-1zM0 9h1v1h-1zM2 9h1v1h-1zM4 9h1v1h-1zM6 9h1v1h-1zM8 9h6v1h-6zM15 9h1v1h-1zM0 10h1v1h-1zM2 10h1v1h-1zM4 10h1v1h-1zM6 10h1v1h-1zM15 10h1v1h-1zM0 11h1v1h-1zM2 11h1v1h-1zM4 11h1v1h-1zM6 11h1v1h-1zM8 11h6v1h-6zM15 11h1v1h-1zM0 12h3v1h-3zM4 12h1v1h-1zM6 12h1v1h-1zM15 12h1v1h-1zM2 13h3v1h-3zM6 13h1v1h-1zM8 13h4v1h-4zM15 13h1v1h-1zM4 14h3v1h-3zM15 14h1v1h-1zM6 15h10v1h-10z"/><path fill="#fff" d="M1 1h1v1h-1zM3 1h1v1h-1zM5 1h2v1h-2zM1 2h1v1h-1zM3 2h1v1h-1zM5 2h4v1h-4zM1 3h1v1h-1zM3 3h1v1h-1zM5 3h1v1h-1zM1 4h1v1h-1zM3 4h1v1h-1zM5 4h1v1h-1zM7 4h5v1h-5zM1 5h1v1h-1zM3 5h1v1h-1zM5 5h1v1h-1zM7 5h1v1h-1zM11 5h1v1h-1zM13 5h1v1h-1zM1 6h1v1h-1zM3 6h1v1h-1zM5 6h1v1h-1zM7 6h5v1h-5zM1 7h1v1h-1zM3 7h1v1h-1zM5 7h1v1h-1zM7 7h1v1h-1zM12 7h3v1h-3zM1 8h1v1h-1zM3 8h1v1h-1zM5 8h1v1h-1zM7 8h8v1h-8zM1 9h1v1h-1zM3 9h1v1h-1zM5 9h1v1h-1zM7 9h1v1h-1zM14 9h1v1h-1zM1 10h1v1h-1zM3 10h1v1h-1zM5 10h1v1h-1zM7 10h8v1h-8zM1 11h1v1h-1zM3 11h1v1h-1zM5 11h1v1h-1zM7 11h1v1h-1zM14 11h1v1h-1zM3 12h1v1h-1zM5 12h1v1h-1zM7 12h8v1h-8zM5 13h1v1h-1zM7 13h1v1h-1zM12 13h3v1h-3zM7 14h8v1h-8z"/></svg>
<svg class="ic" style="filter:blur(.55px);opacity:.85;left:347px;top:59px" width="16" height="16" viewBox="0 0 16 16" shape-rendering="crispEdges"><path fill="#dcdcdc" d="M2 0h1v1h-1zM4 0h1v1h-1zM6 0h6v1h-6zM13 0h1v1h-1zM15 0h1v1h-1zM4 1h1v1h-1zM12 1h1v1h-1zM4 2h1v1h-1zM12 2h1v1h-1zM4 3h1v1h-1zM12 3h1v1h-1zM4 4h1v1h-1zM12 4h1v1h-1zM4 5h1v1h-1zM12 5h1v1h-1zM4 6h1v1h-1zM12 6h1v1h-1zM4 8h1v1h-1zM12 8h1v1h-1zM4 9h1v1h-1zM12 9h1v1h-1zM4 10h1v1h-1zM12 10h1v1h-1zM4 11h1v1h-1zM12 11h1v1h-1zM4 12h1v1h-1zM12 12h1v1h-1zM4 13h1v1h-1zM12 13h1v1h-1zM6 14h5v1h-5zM2 15h1v1h-1zM4 15h1v1h-1zM6 15h6v1h-6zM13 15h1v1h-1zM15 15h1v1h-1z"/><path fill="#b0b0b0" d="M3 0h1v1h-1zM5 0h1v1h-1zM12 0h1v1h-1zM14 0h1v1h-1zM3 1h1v1h-1zM13 1h1v1h-1zM2 2h1v1h-1zM14 2h1v1h-1zM3 3h1v1h-1zM13 3h1v1h-1zM2 4h1v1h-1zM14 4h1v1h-1zM3 5h1v1h-1zM13 5h1v1h-1zM2 6h1v1h-1zM14 6h1v1h-1zM3 7h2v1h-2zM12 7h2v1h-2zM2 8h1v1h-1zM14 8h1v1h-1zM3 9h1v1h-1zM13 9h1v1h-1zM2 10h1v1h-1zM14 10h1v1h-1zM3 11h1v1h-1zM13 11h1v1h-1zM2 12h1v1h-1zM14 12h1v1h-1zM3 13h1v1h-1zM13 13h1v1h-1zM2 14h1v1h-1zM4 14h2v1h-2zM11 14h2v1h-2zM14 14h1v1h-1zM3 15h1v1h-1zM5 15h1v1h-1zM12 15h1v1h-1zM14 15h1v1h-1z"/><path fill="#c0c0c0" d="M2 1h1v1h-1zM14 1h1v1h-1zM2 3h1v1h-1zM14 3h1v1h-1zM2 5h1v1h-1zM14 5h1v1h-1zM2 7h1v1h-1zM14 7h1v1h-1zM2 9h1v1h-1zM14 9h1v1h-1zM2 11h1v1h-1zM14 11h1v1h-1zM2 13h1v1h-1zM14 13h1v1h-1z"/><path fill="#f6d9a0" d="M5 1h7v1h-7zM5 6h7v1h-7zM5 7h7v1h-7zM5 8h7v1h-7zM5 13h7v1h-7z"/><path fill="#808080" d="M3 2h1v1h-1zM13 2h1v1h-1zM3 4h1v1h-1zM13 4h1v1h-1zM3 6h1v1h-1zM13 6h1v1h-1zM3 8h1v1h-1zM13 8h1v1h-1zM3 10h1v1h-1zM13 10h1v1h-1zM3 12h1v1h-1zM13 12h1v1h-1zM3 14h1v1h-1zM13 14h1v1h-1z"/><path fill="#fbeec0" d="M5 2h7v1h-7zM5 3h2v1h-2zM10 3h2v1h-2zM5 4h2v1h-2zM10 4h2v1h-2zM5 5h7v1h-7zM5 9h7v1h-7zM5 10h2v1h-2zM10 10h2v1h-2zM5 11h2v1h-2zM10 11h2v1h-2zM5 12h7v1h-7z"/><path fill="#ffffb0" d="M7 3h3v1h-3zM7 4h3v1h-3zM7 10h3v1h-3zM7 11h3v1h-3z"/></svg>
<svg class="ic" style="left:370px;top:59px" width="16" height="16" viewBox="0 0 16 16" shape-rendering="crispEdges"><path fill="#000" d="M3 0h7v1h-7zM3 1h1v1h-1zM9 1h2v1h-2zM3 2h1v1h-1zM5 2h2v1h-2zM9 2h1v1h-1zM11 2h1v1h-1zM3 3h1v1h-1zM5 3h1v1h-1zM9 3h4v1h-4zM3 4h1v1h-1zM5 4h4v1h-4zM12 4h1v1h-1zM3 5h1v1h-1zM10 5h1v1h-1zM12 5h1v1h-1zM3 6h1v1h-1zM5 6h6v1h-6zM12 6h1v1h-1zM3 7h1v1h-1zM12 7h1v1h-1zM1 8h14v1h-14zM0 9h2v1h-2zM14 9h2v1h-2zM0 10h1v1h-1zM15 10h1v1h-1zM0 11h2v1h-2zM14 11h2v1h-2zM0 12h16v1h-16zM0 13h1v1h-1zM15 13h1v1h-1zM0 14h1v1h-1zM15 14h1v1h-1zM1 15h14v1h-14z"/><path fill="#fff" d="M4 1h5v1h-5zM4 2h1v1h-1zM7 2h2v1h-2zM10 2h1v1h-1zM4 3h1v1h-1zM6 3h3v1h-3zM4 4h1v1h-1zM9 4h3v1h-3zM4 5h6v1h-6zM11 5h1v1h-1zM4 6h1v1h-1zM11 6h1v1h-1zM4 7h8v1h-8zM2 9h1v1h-1zM4 9h1v1h-1zM6 9h1v1h-1zM8 9h1v1h-1zM10 9h1v1h-1zM12 9h2v1h-2zM1 10h1v1h-1zM3 10h1v1h-1zM5 10h1v1h-1zM7 10h1v1h-1zM9 10h1v1h-1zM11 10h1v1h-1zM14 10h1v1h-1zM2 11h1v1h-1zM4 11h1v1h-1zM6 11h1v1h-1zM8 11h1v1h-1zM10 11h1v1h-1zM12 11h2v1h-2z"/><path fill="#c0c0c0" d="M3 9h1v1h-1zM5 9h1v1h-1zM7 9h1v1h-1zM9 9h1v1h-1zM11 9h1v1h-1zM2 10h1v1h-1zM4 10h1v1h-1zM6 10h1v1h-1zM8 10h1v1h-1zM10 10h1v1h-1zM3 11h1v1h-1zM5 11h1v1h-1zM7 11h1v1h-1zM9 11h1v1h-1zM11 11h1v1h-1zM1 13h14v1h-14zM1 14h14v1h-14z"/><path fill="#ff0000" d="M12 10h2v1h-2z"/></svg>
<div class="a tsep" style="left:393px"></div>
<svg class="ic" style="left:399px;top:59px" width="16" height="16" viewBox="0 0 16 16" shape-rendering="crispEdges"><path fill="#000" d="M6 1h5v1h-5zM5 2h2v1h-2zM10 2h2v1h-2zM5 3h1v1h-1zM7 3h3v1h-3zM11 3h1v1h-1zM5 4h1v1h-1zM7 4h1v1h-1zM9 4h1v1h-1zM11 4h1v1h-1zM5 5h1v1h-1zM7 5h1v1h-1zM9 5h1v1h-1zM11 5h1v1h-1zM5 6h1v1h-1zM7 6h1v1h-1zM9 6h1v1h-1zM11 6h1v1h-1zM3 7h11v1h-11zM2 8h1v1h-1zM14 8h1v1h-1zM2 9h1v1h-1zM7 9h3v1h-3zM14 9h1v1h-1zM2 10h1v1h-1zM7 10h3v1h-3zM14 10h1v1h-1zM2 11h1v1h-1zM8 11h1v1h-1zM14 11h1v1h-1zM2 12h1v1h-1zM8 12h1v1h-1zM14 12h1v1h-1zM2 13h1v1h-1zM8 13h1v1h-1zM14 13h1v1h-1zM2 14h1v1h-1zM14 14h1v1h-1zM3 15h11v1h-11z"/><path fill="#c0c0c0" d="M7 2h3v1h-3zM6 3h1v1h-1zM10 3h1v1h-1zM6 4h1v1h-1zM10 4h1v1h-1zM6 5h1v1h-1zM10 5h1v1h-1zM6 6h1v1h-1zM10 6h1v1h-1z"/><path fill="#dcdcdc" d="M8 4h1v1h-1zM8 5h1v1h-1zM8 6h1v1h-1z"/><path fill="#808080" d="M3 8h11v1h-11zM3 10h4v1h-4zM10 10h4v1h-4zM3 12h5v1h-5zM9 12h5v1h-5zM3 14h11v1h-11z"/><path fill="#b0b0b0" d="M3 9h4v1h-4zM10 9h4v1h-4zM3 11h5v1h-5zM9 11h5v1h-5zM3 13h5v1h-5zM9 13h5v1h-5z"/></svg>
<svg class="ic" style="left:422px;top:59px" width="16" height="16" viewBox="0 0 16 16" shape-rendering="crispEdges"><path fill="#000" d="M3 0h5v1h-5zM1 1h2v1h-2zM8 1h4v1h-4zM1 2h1v1h-1zM12 2h1v1h-1zM1 3h1v1h-1zM12 3h1v1h-1zM1 4h1v1h-1zM5 4h6v1h-6zM12 4h1v1h-1zM1 5h1v1h-1zM4 5h1v1h-1zM11 5h3v1h-3zM1 6h1v1h-1zM3 6h1v1h-1zM14 6h1v1h-1zM1 7h3v1h-3zM13 7h3v1h-3zM2 8h2v1h-2zM7 8h7v1h-7zM15 8h1v1h-1zM3 9h1v1h-1zM6 9h1v1h-1zM15 9h1v1h-1zM3 10h1v1h-1zM5 10h1v1h-1zM14 10h1v1h-1zM3 11h2v1h-2zM13 11h1v1h-1zM3 12h1v1h-1zM12 12h1v1h-1zM3 13h9v1h-9z"/><path fill="#f3f36a" d="M3 1h5v1h-5zM2 2h10v1h-10zM2 3h10v1h-10zM2 4h3v1h-3zM11 4h1v1h-1zM2 5h2v1h-2zM5 5h6v1h-6zM2 6h1v1h-1zM4 6h10v1h-10zM4 7h9v1h-9zM4 8h3v1h-3zM14 8h1v1h-1zM4 9h2v1h-2zM7 9h8v1h-8zM4 10h1v1h-1zM6 10h8v1h-8zM5 11h8v1h-8zM4 12h8v1h-8z"/></svg>
<svg class="ic" style="left:445px;top:59px" width="16" height="16" viewBox="0 0 16 16" shape-rendering="crispEdges"><path fill="#000" d="M0 0h7v1h-7zM0 1h1v1h-1zM6 1h2v1h-2zM0 2h1v1h-1zM2 2h2v1h-2zM6 2h1v1h-1zM8 2h1v1h-1zM0 3h1v1h-1zM6 3h4v1h-4zM0 4h1v1h-1zM2 4h3v1h-3zM0 5h1v1h-1zM9 5h1v1h-1zM0 6h1v1h-1zM2 6h6v1h-6zM9 6h1v1h-1zM0 7h1v1h-1zM9 7h1v1h-1zM0 8h1v1h-1zM2 8h6v1h-6zM15 8h1v1h-1zM0 9h1v1h-1zM7 9h1v1h-1zM15 9h1v1h-1zM0 10h1v1h-1zM7 10h1v1h-1zM15 10h1v1h-1zM0 11h16v1h-16zM7 12h9v1h-9zM7 13h3v1h-3zM13 13h3v1h-3zM7 14h3v1h-3zM11 14h1v1h-1zM13 14h3v1h-3zM7 15h3v1h-3zM13 15h3v1h-3z"/><path fill="#fff" d="M1 1h5v1h-5zM1 2h1v1h-1zM4 2h2v1h-2zM7 2h1v1h-1zM1 3h5v1h-5zM1 4h1v1h-1zM5 4h4v1h-4zM1 5h8v1h-8zM1 6h1v1h-1zM8 6h1v1h-1zM1 7h8v1h-8zM1 8h1v1h-1zM1 9h6v1h-6zM8 9h7v1h-7zM1 10h6v1h-6zM8 10h7v1h-7z"/><path fill="#ff0000" d="M10 1h3v1h-3zM11 2h3v1h-3zM11 3h3v1h-3zM9 4h7v1h-7zM10 5h5v1h-5zM11 6h3v1h-3zM12 7h1v1h-1z"/><path fill="#0000ff" d="M8 8h7v1h-7z"/><path fill="#c0c0c0" d="M10 13h3v1h-3zM10 14h1v1h-1zM12 14h1v1h-1zM10 15h3v1h-3z"/></svg>
<div class="a tsep" style="left:468px"></div>
<svg class="ic" style="left:474px;top:59px" width="16" height="16" viewBox="0 0 16 16" shape-rendering="crispEdges"><path fill="#2a70c8" d="M3 0h10v1h-10zM2 1h1v1h-1zM13 1h1v1h-1zM2 2h1v1h-1zM13 2h1v1h-1zM2 3h1v1h-1zM13 3h1v1h-1z"/><path fill="#3c86d8" d="M3 1h10v1h-10zM3 2h1v1h-1zM12 2h1v1h-1zM3 3h10v1h-10zM2 4h1v1h-1zM13 4h1v1h-1zM2 5h1v1h-1zM13 5h1v1h-1zM2 6h1v1h-1zM13 6h1v1h-1zM2 7h1v1h-1zM13 7h1v1h-1zM2 8h1v1h-1zM13 8h1v1h-1zM2 9h1v1h-1zM13 9h1v1h-1zM2 10h1v1h-1zM13 10h1v1h-1zM2 11h1v1h-1zM13 11h1v1h-1zM2 12h1v1h-1zM13 12h1v1h-1zM2 13h1v1h-1zM13 13h1v1h-1zM2 14h12v1h-12zM3 15h10v1h-10z"/><path fill="#a8cdf2" d="M4 2h8v1h-8z"/><path fill="#dfecfa" d="M3 4h10v1h-10zM3 5h10v1h-10zM3 6h1v1h-1zM6 6h1v1h-1zM9 6h1v1h-1zM12 6h1v1h-1zM3 7h10v1h-10zM3 8h1v1h-1zM6 8h1v1h-1zM9 8h1v1h-1zM12 8h1v1h-1zM3 9h10v1h-10zM3 10h1v1h-1zM6 10h1v1h-1zM9 10h1v1h-1zM12 10h1v1h-1zM3 11h10v1h-10zM3 12h1v1h-1zM6 12h1v1h-1zM9 12h1v1h-1zM12 12h1v1h-1zM3 13h10v1h-10z"/><path fill="#6aa5e8" d="M4 6h2v1h-2zM7 6h2v1h-2zM4 8h2v1h-2zM7 8h2v1h-2zM10 8h2v1h-2zM4 10h2v1h-2zM7 10h2v1h-2zM10 10h2v1h-2zM4 12h2v1h-2zM7 12h2v1h-2zM10 12h2v1h-2z"/><path fill="#ff0000" d="M10 6h2v1h-2z"/></svg>
<div class="a" style="left:497px;top:59px;width:16px;height:16px;border-radius:8px;background:#ffff84"></div>
<div class="a qm">?</div>
<svg class="ic" style="left:520px;top:59px" width="16" height="14" viewBox="0 0 16 14" shape-rendering="crispEdges"><path fill="#000" d="M15 0h1v1h-1zM1 6h2v1h-2zM0 7h1v1h-1zM3 7h1v1h-1zM4 8h1v1h-1zM5 9h1v1h-1zM6 10h1v1h-1z"/><path fill="#ff0000" d="M14 1h2v1h-2zM13 2h2v1h-2zM12 3h3v1h-3zM11 4h3v1h-3zM10 5h3v1h-3zM9 6h3v1h-3zM1 7h2v1h-2zM8 7h3v1h-3zM1 8h3v1h-3zM8 8h3v1h-3zM2 9h3v1h-3zM7 9h3v1h-3zM3 10h3v1h-3zM7 10h3v1h-3zM4 11h5v1h-5zM5 12h4v1h-4zM6 13h2v1h-2z"/></svg>
<div class="a" id="bluebar"></div>
<div class="a" style="left:1px;top:106px;width:792px;height:1px;background:#000"></div>
<div class="a inp" style="left:45px;top:83px;width:178px;height:20px;"></div>
<div class="a btn" style="left:230px;top:83px;width:51px;height:21px;"></div>
<div class="a" style="left:288px;top:83px;width:1px;height:24px;background:#000"></div>
<div class="a inp" style="left:329px;top:83px;width:110px;height:20px;"></div>
<div class="a btn" style="left:446px;top:83px;width:50px;height:21px;"></div>
<div class="a" style="left:504px;top:80px;width:1px;height:27px;background:#000"></div>
<div class="a" style="left:511px;top:85px;width:13px;height:13px;box-sizing:border-box;border:1px solid #333;background:#fff"></div>
<div class="a" style="left:593px;top:86px;width:13px;height:13px;box-sizing:border-box;border:1px solid #333;background:#fff"></div>
<div class="a" style="left:691px;top:80px;width:1px;height:27px;background:#000"></div>

<!-- tab panel -->
<div class="a" style="left:13px;top:135px;width:770px;height:437px;box-sizing:border-box;border:1px solid #d9d9d9;background:#fff"></div>
<div class="a" style="left:17px;top:137px;width:764px;height:432px;background:#f0f0f0"></div>
<!-- tabs -->
<div class="a tab" style="left:15px;width:65px;"></div>
<div class="a tab" style="left:79px;width:45px;"></div>
<div class="a tab" style="left:199px;width:52px;"></div>
<div class="a tab" style="left:250px;width:47px;"></div>
<div class="a tab" style="left:296px;width:64px;"></div>
<div class="a tab" style="left:359px;width:71px;"></div>
<div class="a tab" style="left:122px;width:78px;top:115px;height:22px;background:#fff;"></div>
<div class="a" style="left:125px;top:118px;width:72px;height:16px;box-sizing:border-box;border:1px dotted #000;"></div>

<!-- frame 1 -->
<div class="a" style="left:38px;top:158px;width:723px;height:311px;box-sizing:border-box;border:1px solid #fff;"></div>
<div class="a" style="left:37px;top:157px;width:723px;height:311px;box-sizing:border-box;border:1px solid #a0a0a0;"></div>
<!-- grid -->
<div class="a" style="left:57px;top:177px;width:684px;height:272px;box-sizing:border-box;border:1px solid #0a6cd2;background:#fff"></div>
<div class="a" style="left:59px;top:179px;width:680px;height:16px;background:linear-gradient(#fdfdfd,#ebebeb)"></div>
<div class="a" style="left:59px;top:197px;width:20px;height:248px;background:linear-gradient(90deg,#fff,#eee)"></div>
<div class="a" style="left:79px;top:197px;width:1px;height:248px;background:#f8f8f8"></div>
<div class="a" style="left:78px;top:179px;width:2px;height:17px;background:#f7f7f7"></div>
<div class="a cs" style="left:168px;"></div>
<div class="a cs" style="left:258px;"></div>
<div class="a cs" style="left:348px;"></div>
<div class="a cs" style="left:438px;"></div>
<div class="a cs" style="left:528px;"></div>

<!-- frame 2 -->
<div class="a" style="left:38px;top:480px;width:723px;height:79px;box-sizing:border-box;border:1px solid #fff;"></div>
<div class="a" style="left:37px;top:479px;width:723px;height:79px;box-sizing:border-box;border:1px solid #a0a0a0;"></div>
<!-- buttons -->
<div class="a btn" style="left:192px;top:490px;width:98px;height:23px;"></div>
<div class="a btn" style="left:302px;top:490px;width:98px;height:23px;"></div>
<div class="a btn" style="left:412px;top:490px;width:98px;height:23px;"></div>
<div class="a btn" style="left:522px;top:490px;width:98px;height:23px;"></div>
<div class="a btn" style="left:192px;top:525px;width:98px;height:23px;"></div>
<div class="a btn" style="left:302px;top:525px;width:98px;height:23px;"></div>
<div class="a btn" style="left:412px;top:525px;width:98px;height:23px;"></div>
<div class="a btn" style="left:522px;top:525px;width:98px;height:23px;"></div>

<svg class="ic" style="left:220px;top:494px" width="16" height="14" viewBox="0 0 16 14" shape-rendering="crispEdges"><path fill="#000" d="M12 0h3v1h-3zM12 1h3v1h-3zM12 6h3v1h-3zM12 7h3v1h-3zM12 9h3v1h-3zM12 10h3v1h-3zM12 12h3v1h-3zM12 13h3v1h-3z"/><path fill="#0000ff" d="M6 1h1v1h-1zM6 2h3v1h-3zM0 3h10v1h-10zM0 4h10v1h-10zM6 5h3v1h-3zM6 6h1v1h-1z"/><path fill="#ff0000" d="M11 3h2v1h-2zM11 4h2v1h-2zM2 8h2v1h-2zM2 9h2v1h-2zM0 10h6v1h-6zM0 11h6v1h-6zM2 12h2v1h-2zM2 13h2v1h-2z"/></svg>
<svg class="ic" style="left:210px;top:529px" width="16" height="14" viewBox="0 0 16 14" shape-rendering="crispEdges"><path fill="#000" d="M12 0h3v1h-3zM12 1h3v1h-3zM12 6h3v1h-3zM12 7h3v1h-3zM12 9h3v1h-3zM12 10h3v1h-3zM12 12h3v1h-3zM12 13h3v1h-3z"/><path fill="#0000ff" d="M3 1h1v1h-1zM1 2h3v1h-3zM0 3h10v1h-10zM0 4h10v1h-10zM1 5h3v1h-3zM3 6h1v1h-1z"/><path fill="#ff0000" d="M11 3h2v1h-2zM11 4h2v1h-2zM0 10h6v1h-6zM0 11h6v1h-6z"/></svg>
<svg class="ic" style="left:321px;top:493px" width="9" height="16" viewBox="0 0 9 16" shape-rendering="crispEdges"><path fill="#000" d="M4 0h1v1h-1zM4 1h1v1h-1zM3 2h1v1h-1zM5 2h1v1h-1zM3 3h1v1h-1zM5 3h1v1h-1zM2 4h1v1h-1zM6 4h1v1h-1zM2 5h1v1h-1zM6 5h1v1h-1zM1 6h1v1h-1zM7 6h1v1h-1zM1 7h1v1h-1zM7 7h1v1h-1zM0 8h1v1h-1zM8 8h1v1h-1zM0 9h4v1h-4zM5 9h4v1h-4zM3 10h1v1h-1zM5 10h1v1h-1zM3 11h1v1h-1zM5 11h1v1h-1zM3 12h1v1h-1zM5 12h1v1h-1zM3 13h1v1h-1zM5 13h1v1h-1zM3 14h1v1h-1zM5 14h1v1h-1zM3 15h3v1h-3z"/><path fill="#ff0000" d="M4 2h1v1h-1zM4 3h1v1h-1zM3 4h3v1h-3zM3 5h3v1h-3zM2 6h5v1h-5zM2 7h5v1h-5zM1 8h7v1h-7zM4 9h1v1h-1zM4 10h1v1h-1zM4 11h1v1h-1zM4 12h1v1h-1zM4 13h1v1h-1zM4 14h1v1h-1z"/></svg>
<svg class="ic" style="left:313px;top:528px" width="9" height="16" viewBox="0 0 9 16" shape-rendering="crispEdges"><path fill="#000" d="M3 0h3v1h-3zM3 1h1v1h-1zM5 1h1v1h-1zM3 2h1v1h-1zM5 2h1v1h-1zM3 3h1v1h-1zM5 3h1v1h-1zM3 4h1v1h-1zM5 4h1v1h-1zM3 5h1v1h-1zM5 5h1v1h-1zM0 6h4v1h-4zM5 6h4v1h-4zM0 7h1v1h-1zM8 7h1v1h-1zM1 8h1v1h-1zM7 8h1v1h-1zM1 9h1v1h-1zM7 9h1v1h-1zM2 10h1v1h-1zM6 10h1v1h-1zM2 11h1v1h-1zM6 11h1v1h-1zM3 12h1v1h-1zM5 12h1v1h-1zM3 13h1v1h-1zM5 13h1v1h-1zM4 14h1v1h-1zM4 15h1v1h-1z"/><path fill="#ff0000" d="M4 1h1v1h-1zM4 2h1v1h-1zM4 3h1v1h-1zM4 4h1v1h-1zM4 5h1v1h-1zM4 6h1v1h-1zM1 7h7v1h-7zM2 8h5v1h-5zM2 9h5v1h-5zM3 10h3v1h-3zM3 11h3v1h-3zM4 12h1v1h-1zM4 13h1v1h-1z"/></svg>
<svg class="ic" style="left:439px;top:493px" width="16" height="14" viewBox="0 0 16 14" shape-rendering="crispEdges"><path fill="#000" d="M6 4h4v1h-4zM0 5h4v1h-4zM5 5h1v1h-1zM10 5h1v1h-1zM0 6h3v1h-3zM4 6h1v1h-1zM11 6h4v1h-4zM0 7h3v1h-3zM4 7h1v1h-1zM15 7h1v1h-1zM0 8h3v1h-3zM4 8h1v1h-1zM15 8h1v1h-1zM0 9h3v1h-3zM4 9h1v1h-1zM9 9h6v1h-6zM0 10h3v1h-3zM4 10h1v1h-1zM11 10h1v1h-1zM0 11h3v1h-3zM4 11h1v1h-1zM8 11h4v1h-4zM0 12h1v1h-1zM2 12h1v1h-1zM4 12h1v1h-1zM10 12h1v1h-1zM0 13h4v1h-4zM6 13h4v1h-4z"/><path fill="#ffff00" d="M6 5h1v1h-1zM8 5h1v1h-1zM5 6h1v1h-1zM7 6h1v1h-1zM9 6h1v1h-1zM6 7h1v1h-1zM8 7h1v1h-1zM10 7h1v1h-1zM12 7h1v1h-1zM14 7h1v1h-1zM5 8h1v1h-1zM7 8h1v1h-1zM9 8h1v1h-1zM11 8h1v1h-1zM13 8h1v1h-1zM6 9h1v1h-1zM8 9h1v1h-1zM5 10h1v1h-1zM7 10h1v1h-1zM9 10h1v1h-1zM6 11h1v1h-1zM1 12h1v1h-1zM5 12h1v1h-1zM7 12h1v1h-1zM9 12h1v1h-1z"/><path fill="#ffffb0" d="M7 5h1v1h-1zM9 5h1v1h-1zM6 6h1v1h-1zM8 6h1v1h-1zM10 6h1v1h-1zM5 7h1v1h-1zM7 7h1v1h-1zM9 7h1v1h-1zM11 7h1v1h-1zM13 7h1v1h-1zM6 8h1v1h-1zM8 8h1v1h-1zM10 8h1v1h-1zM12 8h1v1h-1zM14 8h1v1h-1zM5 9h1v1h-1zM7 9h1v1h-1zM6 10h1v1h-1zM8 10h1v1h-1zM10 10h1v1h-1zM5 11h1v1h-1zM7 11h1v1h-1zM6 12h1v1h-1zM8 12h1v1h-1z"/><path fill="#00d8e8" d="M3 6h1v1h-1zM3 7h1v1h-1zM3 8h1v1h-1zM3 9h1v1h-1zM3 10h1v1h-1zM3 11h1v1h-1zM3 12h1v1h-1z"/></svg>
<svg class="ic" style="left:544px;top:494px" width="17" height="16" viewBox="0 0 17 16" shape-rendering="crispEdges"><path fill="#000" d="M0 0h7v1h-7zM0 1h1v1h-1zM6 1h2v1h-2zM0 2h1v1h-1zM2 2h2v1h-2zM6 2h1v1h-1zM8 2h1v1h-1zM0 3h1v1h-1zM6 3h4v1h-4zM0 4h1v1h-1zM2 4h2v1h-2zM9 4h1v1h-1zM0 5h1v1h-1zM9 5h2v1h-2zM0 6h1v1h-1zM2 6h2v1h-2zM9 6h1v1h-1zM11 6h1v1h-1zM0 7h1v1h-1zM12 7h1v1h-1zM0 8h1v1h-1zM2 8h2v1h-2zM13 8h1v1h-1zM0 9h1v1h-1zM14 9h1v1h-1zM0 10h1v1h-1zM15 10h1v1h-1zM0 11h1v1h-1zM14 11h1v1h-1zM0 12h6v1h-6zM13 12h1v1h-1zM9 13h1v1h-1zM12 13h1v1h-1zM9 14h1v1h-1zM11 14h1v1h-1zM9 15h2v1h-2z"/><path fill="#fff" d="M1 1h5v1h-5zM1 2h1v1h-1zM4 2h2v1h-2zM7 2h1v1h-1zM1 3h5v1h-5zM1 4h1v1h-1zM4 4h5v1h-5zM1 5h8v1h-8zM1 6h1v1h-1zM4 6h5v1h-5zM1 7h5v1h-5zM1 8h1v1h-1zM4 8h2v1h-2zM1 9h5v1h-5zM1 10h5v1h-5zM1 11h5v1h-5z"/><path fill="#ff0000" d="M10 6h1v1h-1zM6 7h6v1h-6zM6 8h7v1h-7zM6 9h8v1h-8zM6 10h9v1h-9zM6 11h8v1h-8zM6 12h7v1h-7zM10 13h2v1h-2zM10 14h1v1h-1z"/></svg>
<svg class="ic" style="left:440px;top:528px" width="16" height="16" viewBox="0 0 16 16" shape-rendering="crispEdges"><path fill="#000" d="M7 0h6v1h-6zM3 1h1v1h-1zM7 1h1v1h-1zM12 1h2v1h-2zM2 2h1v1h-1zM4 2h1v1h-1zM8 2h2v1h-2zM12 2h1v1h-1zM14 2h1v1h-1zM3 3h1v1h-1zM5 3h1v1h-1zM12 3h4v1h-4zM4 4h1v1h-1zM6 4h1v1h-1zM8 4h3v1h-3zM15 4h1v1h-1zM2 5h4v1h-4zM7 5h1v1h-1zM15 5h1v1h-1zM2 6h1v1h-1zM6 6h1v1h-1zM8 6h1v1h-1zM10 6h3v1h-3zM15 6h1v1h-1zM2 7h1v1h-1zM7 7h1v1h-1zM9 7h1v1h-1zM15 7h1v1h-1zM2 8h1v1h-1zM5 8h4v1h-4zM10 8h2v1h-2zM15 8h1v1h-1zM2 9h1v1h-1zM9 9h1v1h-1zM11 9h1v1h-1zM15 9h1v1h-1zM2 10h1v1h-1zM5 10h6v1h-6zM15 10h1v1h-1zM2 11h1v1h-1zM8 11h1v1h-1zM10 11h3v1h-3zM15 11h1v1h-1zM2 12h2v1h-2zM6 12h3v1h-3zM15 12h1v1h-1zM3 13h4v1h-4zM15 13h1v1h-1zM5 14h1v1h-1zM15 14h1v1h-1zM5 15h11v1h-11z"/><path fill="#ff0000" d="M2 1h1v1h-1z"/><path fill="#fff" d="M8 1h4v1h-4zM7 2h1v1h-1zM10 2h2v1h-2zM13 2h1v1h-1zM7 3h5v1h-5zM7 4h1v1h-1zM11 4h4v1h-4zM8 5h7v1h-7zM9 6h1v1h-1zM13 6h2v1h-2zM10 7h5v1h-5zM12 8h3v1h-3zM12 9h3v1h-3zM11 10h4v1h-4zM9 11h1v1h-1zM13 11h2v1h-2zM9 12h6v1h-6zM7 13h8v1h-8zM6 14h9v1h-9z"/><path fill="#b4b400" d="M3 2h1v1h-1zM4 3h1v1h-1zM5 4h1v1h-1zM6 5h1v1h-1zM7 6h1v1h-1zM8 7h1v1h-1zM9 8h1v1h-1zM10 9h1v1h-1z"/><path fill="#00d8e8" d="M0 6h2v1h-2zM0 7h2v1h-2zM0 8h2v1h-2zM0 9h2v1h-2zM0 10h2v1h-2zM0 11h2v1h-2zM0 12h2v1h-2z"/><path fill="#ffff00" d="M3 6h1v1h-1zM5 6h1v1h-1zM4 7h1v1h-1zM6 7h1v1h-1zM3 8h1v1h-1zM4 9h1v1h-1zM6 9h1v1h-1zM8 9h1v1h-1zM3 10h1v1h-1zM4 11h1v1h-1zM6 11h1v1h-1zM5 12h1v1h-1z"/><path fill="#ffffb0" d="M4 6h1v1h-1zM3 7h1v1h-1zM5 7h1v1h-1zM4 8h1v1h-1zM3 9h1v1h-1zM5 9h1v1h-1zM7 9h1v1h-1zM4 10h1v1h-1zM3 11h1v1h-1zM5 11h1v1h-1zM7 11h1v1h-1zM4 12h1v1h-1z"/></svg>
<svg class="ic" style="left:549px;top:528px" width="16" height="16" viewBox="0 0 16 16" shape-rendering="crispEdges"><path fill="#000" d="M3 0h7v1h-7zM3 1h1v1h-1zM9 1h2v1h-2zM3 2h1v1h-1zM5 2h2v1h-2zM9 2h1v1h-1zM11 2h1v1h-1zM3 3h1v1h-1zM5 3h1v1h-1zM9 3h4v1h-4zM3 4h1v1h-1zM5 4h4v1h-4zM12 4h1v1h-1zM3 5h1v1h-1zM10 5h1v1h-1zM12 5h1v1h-1zM3 6h1v1h-1zM5 6h6v1h-6zM12 6h1v1h-1zM3 7h1v1h-1zM12 7h1v1h-1zM1 8h14v1h-14zM0 9h2v1h-2zM14 9h2v1h-2zM0 10h1v1h-1zM15 10h1v1h-1zM0 11h2v1h-2zM14 11h2v1h-2zM0 12h16v1h-16zM0 13h1v1h-1zM15 13h1v1h-1zM0 14h1v1h-1zM15 14h1v1h-1zM1 15h14v1h-14z"/><path fill="#fff" d="M4 1h5v1h-5zM4 2h1v1h-1zM7 2h2v1h-2zM10 2h1v1h-1zM4 3h1v1h-1zM6 3h3v1h-3zM4 4h1v1h-1zM9 4h3v1h-3zM4 5h6v1h-6zM11 5h1v1h-1zM4 6h1v1h-1zM11 6h1v1h-1zM4 7h8v1h-8zM2 9h1v1h-1zM4 9h1v1h-1zM6 9h1v1h-1zM8 9h1v1h-1zM10 9h1v1h-1zM12 9h2v1h-2zM1 10h1v1h-1zM3 10h1v1h-1zM5 10h1v1h-1zM7 10h1v1h-1zM9 10h1v1h-1zM11 10h1v1h-1zM14 10h1v1h-1zM2 11h1v1h-1zM4 11h1v1h-1zM6 11h1v1h-1zM8 11h1v1h-1zM10 11h1v1h-1zM12 11h2v1h-2z"/><path fill="#c0c0c0" d="M3 9h1v1h-1zM5 9h1v1h-1zM7 9h1v1h-1zM9 9h1v1h-1zM11 9h1v1h-1zM2 10h1v1h-1zM4 10h1v1h-1zM6 10h1v1h-1zM8 10h1v1h-1zM10 10h1v1h-1zM3 11h1v1h-1zM5 11h1v1h-1zM7 11h1v1h-1zM9 11h1v1h-1zM11 11h1v1h-1zM1 13h14v1h-14zM1 14h14v1h-14z"/><path fill="#ff0000" d="M12 10h2v1h-2z"/></svg>
<div class="t" style="left:30.14px;top:10px;font-size:12px;transform:scaleX(0.9821);">Tracker Ten for Home Inventory</div>
<div class="t" style="left:15.66px;top:37px;font-size:12px;transform:scaleX(0.9793);">File</div>
<div class="t" style="left:52.99px;top:37px;font-size:12px;transform:scaleX(0.9554);">Edit</div>
<div class="t" style="left:91.84px;top:37px;font-size:12px;transform:scaleX(0.9610);">View</div>
<div class="t" style="left:135.77px;top:37px;font-size:12px;transform:scaleX(0.9753);">Report</div>
<div class="t" style="left:189.48px;top:37px;font-size:12px;transform:scaleX(1.0165);">Utilities</div>
<div class="t" style="left:247.63px;top:37px;font-size:12px;transform:scaleX(1.0059);">Publish</div>
<div class="t" style="left:304.89px;top:37px;font-size:12px;transform:scaleX(1.0476);">Help</div>
<div class="t" style="left:349.70px;top:37px;font-size:12px;transform:scaleX(0.9441);">Register</div>
<div class="t" style="left:411.14px;top:37px;font-size:12px;transform:scaleX(1.0166);">About</div>
<div class="t" style="left:462.23px;top:37px;font-size:12px;transform:scaleX(1.0067);">Debug</div>
<div class="t" style="left:6.69px;top:87px;font-size:12px;color:#120a3a;transform:scaleX(0.8610);">Name</div>
<div class="t" style="left:46.87px;top:87px;font-size:12px;color:#120a3a;transform:scaleX(0.9370);">Untitled 2</div>
<div class="t" style="left:238.23px;top:88px;font-size:12px;color:#120a3a;transform:scaleX(0.9179);">Linked</div>
<div class="t" style="left:298.19px;top:87px;font-size:12px;color:#120a3a;transform:scaleX(0.8634);">Find</div>
<div class="t" style="left:463.61px;top:88px;font-size:12px;color:#120a3a;transform:scaleX(0.8763);">Go</div>
<div class="t" style="left:529.88px;top:86px;font-size:12px;color:#120a3a;transform:scaleX(0.8681);">Read Only</div>
<div class="t" style="left:611.33px;top:87px;font-size:12px;color:#120a3a;transform:scaleX(0.8722);">On Search List</div>
<div class="t" style="left:700.99px;top:87px;font-size:12px;color:#120a3a;transform:scaleX(0.8709);">1 of 11</div>
<div class="t" style="left:19.90px;top:121px;font-size:12px;color:#120a3a;transform:scaleX(0.8937);">Description</div>
<div class="t" style="left:85.09px;top:121px;font-size:12px;color:#120a3a;transform:scaleX(0.8619);">Details</div>
<div class="t" style="left:129.76px;top:119px;font-size:12px;color:#120a3a;transform:scaleX(0.8880);">Maintenance</div>
<div class="t" style="left:203.08px;top:121px;font-size:12px;color:#120a3a;transform:scaleX(0.8732);">Features</div>
<div class="t" style="left:256.32px;top:121px;font-size:12px;color:#120a3a;transform:scaleX(0.8664);">Images</div>
<div class="t" style="left:302.36px;top:121px;font-size:12px;color:#120a3a;transform:scaleX(0.8857);">Purchased</div>
<div class="t" style="left:365.87px;top:121px;font-size:12px;color:#120a3a;transform:scaleX(0.8962);">Web Search</div>
<div class="t" style="left:84.74px;top:180px;font-size:14px;color:#1c0c8e;transform:scaleX(0.9422);">Date</div>
<div class="t" style="left:174.43px;top:180px;font-size:14px;color:#1c0c8e;transform:scaleX(0.9559);">Service</div>
<div class="t" style="left:264.85px;top:180px;font-size:14px;color:#1c0c8e;transform:scaleX(0.9402);">Cost</div>
<div class="t" style="left:355.15px;top:180px;font-size:14px;color:#1c0c8e;transform:scaleX(0.9333);">Contact</div>
<div class="t" style="left:444.54px;top:180px;font-size:14px;color:#1c0c8e;transform:scaleX(0.9453);">Notes</div>
<div class="t" style="left:239.26px;top:496px;font-size:12px;color:#120a3a;transform:scaleX(0.8659);">Add</div>
<div class="t" style="left:335.64px;top:496px;font-size:12px;color:#120a3a;transform:scaleX(0.9105);">Move Up</div>
<div class="t" style="left:457.90px;top:496px;font-size:12px;color:#120a3a;transform:scaleX(0.8496);">Find</div>
<div class="t" style="left:562.81px;top:496px;font-size:12px;color:#120a3a;transform:scaleX(0.8403);">Export</div>
<div class="t" style="left:228.87px;top:531px;font-size:12px;color:#120a3a;transform:scaleX(0.8769);">Remove</div>
<div class="t" style="left:328.53px;top:531px;font-size:12px;color:#120a3a;transform:scaleX(0.9178);">Move Down</div>
<div class="t" style="left:459.60px;top:531px;font-size:12px;color:#120a3a;transform:scaleX(0.8537);">Edit</div>
<div class="t" style="left:567.64px;top:531px;font-size:12px;color:#120a3a;transform:scaleX(0.8151);">Print</div>
<!-- window borders -->
<div class="a" style="left:1px;top:107px;width:792px;height:1px;background:#fff"></div>
<div class="a" style="left:792px;top:107px;width:1px;height:492px;background:#fff"></div>
<div class="a" style="left:1px;top:598px;width:792px;height:1px;background:#fbfbfb"></div>
<div class="a" style="left:0;top:0;width:794px;height:1px;background:#141c2e"></div>
<div class="a" style="left:0;top:0;width:1px;height:600px;background:linear-gradient(#0d1420 0,#0d1420 47px,#50586a 47px,#50586a 105px,#1c2436 105px,#1c2436 190px,#5c5c5c 190px,#6a6a6a 100%)"></div>
<div class="a" style="left:793px;top:0;width:1px;height:600px;background:linear-gradient(#1a2338 0,#1a2338 46px,#8c8c8c 46px,#8c8c8c 72px,#2a3040 72px,#2a3040 166px,#6c6c6c 166px,#6c6c6c 100%)"></div>
<div class="a" style="left:0;top:599px;width:794px;height:1px;background:#6a6a6a"></div>
</div>

</body></html>
